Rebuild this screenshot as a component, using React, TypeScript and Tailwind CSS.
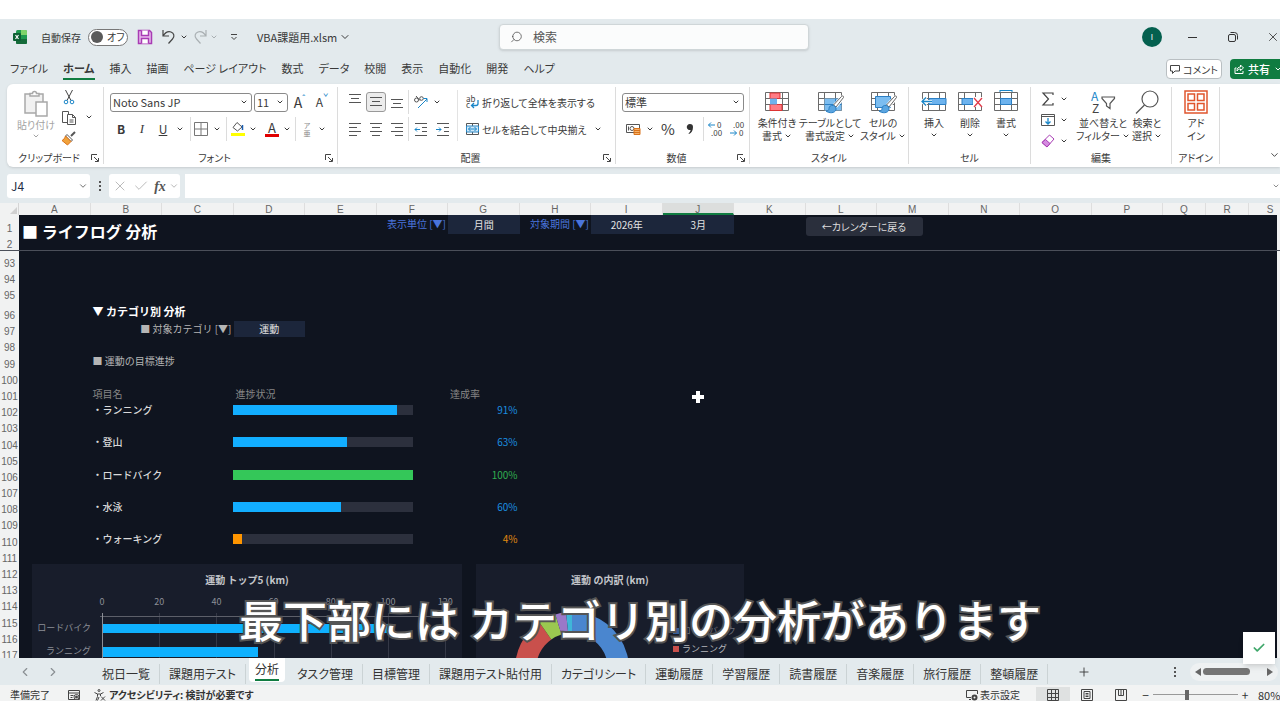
import React from 'react';
import { ChevronDown, ChevronLeft, ChevronRight, Check, X, Plus, Search } from 'lucide-react';
import clsx from 'clsx';

const menuTabs = ['ファイル', 'ホーム', '挿入', '描画', 'ページ レイアウト', '数式', 'データ', '校閲', '表示', '自動化', '開発', 'ヘルプ'];

const sheetTabs = [
  '祝日一覧', '課題用テスト', '分析', 'タスク管理', '目標管理', '課題用テスト貼付用', 'カテゴリシート',
  '運動履歴', '学習履歴', '読書履歴', '音楽履歴', '旅行履歴', '整頓履歴',
];

const columns = 'ABCDEFGHIJKLMNOPQRS'.split('');
const scrolledRows = Array.from({ length: 25 }, (_, i) => 93 + i);

const goals = [
  { name: 'ランニング', percent: 91, bar: 'bg-[#12aeff]', text: 'text-[#1b8fe0]' },
  { name: '登山', percent: 63, bar: 'bg-[#12aeff]', text: 'text-[#1b8fe0]' },
  { name: 'ロードバイク', percent: 100, bar: 'bg-[#34c759]', text: 'text-[#2fae50]' },
  { name: '水泳', percent: 60, bar: 'bg-[#12aeff]', text: 'text-[#1b8fe0]' },
  { name: 'ウォーキング', percent: 4, bar: 'bg-[#ff9500]', text: 'text-[#e08a10]' },
];

const columnGrid = 'grid w-[1273px] shrink-0 grid-cols-[repeat(16,1fr)_repeat(3,43px)]';
const scrolledGrid = 'grid h-[410px] grid-rows-[18px_16px_16px_20px_repeat(21,1fr)]';

const Caret: React.FC<{ className?: string }> = ({ className }) => (
  <ChevronDown className={clsx('h-2 w-2 shrink-0', className)} strokeWidth={3} />
);

type ToolProps = { label: string; className?: string; children: React.ReactNode };

const Tool: React.FC<ToolProps> = ({ label, className, children }) => (
  <button type="button" aria-label={label} className={clsx('flex shrink-0 items-center justify-center', className)}>
    {children}
  </button>
);

const Divider = () => <div className="h-6 w-px shrink-0 bg-[#dcdcdc]" />;

const Launcher = () => (
  <button type="button" aria-label="詳細" className="absolute right-1 bottom-[2px]">
    <svg className="h-2 w-2" viewBox="0 0 8 8" fill="none" stroke="#444">
      <path d="M.5 6V.5H6M3 3l4 4M7.5 4v3.5H4" />
    </svg>
  </button>
);

type GroupProps = { title: string; className?: string; launcher?: boolean; children: React.ReactNode };

const Group: React.FC<GroupProps> = ({ title, className, launcher, children }) => (
  <section className={clsx('relative my-[3px] flex shrink-0 flex-col justify-between border-r border-[#dcdcdc]', className)}>
    <div className="pt-[3px]">{children}</div>
    <h2 className={clsx('text-center text-[10px] leading-3', launcher && 'pr-3')}>{title}</h2>
    {launcher && <Launcher />}
  </section>
);

type LinesProps = { widths: number[]; align: 'left' | 'center' | 'right'; arrow?: 'in' | 'out' };

const Lines: React.FC<LinesProps> = ({ widths, align, arrow }) => (
  <svg className="h-4 w-4" viewBox="0 0 16 16" fill="none" stroke="#555">
    {widths.map((w, i) => {
      const x = align === 'left' ? 2 : align === 'right' ? 14 - w : 8 - w / 2;
      return <path key={i} d={`M${x} ${2.5 + i * 4}h${w}`} />;
    })}
    {arrow === 'out' && <path d="M7 8.5H2M4 6.5l-2 2 2 2" stroke="#1a86c8" />}
    {arrow === 'in' && <path d="M1 8.5h5M4 6.5l2 2-2 2" stroke="#1a86c8" />}
  </svg>
);

/* Small worksheet picture that the style and cell commands are built on */
const GridIcon: React.FC<{ children?: React.ReactNode }> = ({ children }) => (
  <svg className="h-6 w-7" viewBox="0 0 28 24" fill="none">
    <path d="M2.5 2.5h23v18h-23zM8.500 2.5v18M19.500 2.5v18M2.5 8.500h23M2.5 14.500h23" stroke="#6a6a6a" />
    {children}
  </svg>
);

type BigToolProps = { lines: string[]; className?: string; caretBelow?: boolean; caret?: boolean; children: React.ReactNode };

const BigTool: React.FC<BigToolProps> = ({ lines, className, caretBelow, caret, children }) => (
  <button type="button" className={clsx('flex shrink-0 flex-col items-center text-[10px] leading-[13px]', className)}>
    <span className="mb-[2px] flex h-6 items-center">{children}</span>
    {lines.map((line, i) => (
      <span key={line} className="flex items-center gap-[2px] whitespace-nowrap">
        {line}
        {caret && i === lines.length - 1 && <Caret />}
      </span>
    ))}
    {caretBelow && <Caret className="mt-[2px]" />}
  </button>
);

const PaintBrush = () => (
  <>
    <path d="M27 7l-8 9" stroke="#fff" strokeWidth="5" />
    <path d="M25.500 6.500l-8 8.500 2.500 2 7.500-9.500c.8-1.200-1-2.200-2-1z" fill="#fff" stroke="#666" />
    <path d="M17.500 15.500c-3-.5-4.500 1-4.500 3 0 1.500-1 2.500-3 2.500 3 2.500 9 2.500 10-1.500.3-2-.7-3.500-2.500-4z" fill="#5aa5e0" stroke="#2b7fc4" />
  </>
);

const TitleBar = () => (
  <header className="flex h-9 items-center">
    <div className="flex w-[499px] shrink-0 items-center">
      <svg className="ml-3 h-4 w-4" viewBox="0 0 16 16">
        <rect x="4" y="1" width="11" height="14" rx="1.500" fill="#1f9a50" />
        <path d="M9 1h4.500A1.500 1.500 0 0 1 15 2.500V6H9z" fill="#7fd36a" />
        <path d="M4 10h11v3.500a1.500 1.500 0 0 1-1.500 1.500h-8A1.500 1.500 0 0 1 4 13.500z" fill="#156b3a" />
        <rect x="1" y="4" width="8" height="8" rx="1" fill="#0d6134" />
        <path d="M3.500 6l3 4M6.500 6l-3 4" stroke="#fff" strokeWidth="1.200" />
      </svg>
      <label htmlFor="autosave" className="ml-[13px] w-[47px] text-[10px]">自動保存</label>
      <span className="relative flex h-[17px] w-10 items-center rounded-full border border-[#777] bg-white">
        <input id="autosave" type="checkbox" role="switch" className="absolute inset-0 appearance-none" />
        <span className="ml-[2px] h-3 w-3 shrink-0 rounded-full bg-[#5a5a5a]" />
        <span className="ml-1 text-[10px] leading-3 whitespace-nowrap">オフ</span>
      </span>
      <Tool label="上書き保存" className="ml-[9px] w-4">
        <svg className="h-4 w-4" viewBox="0 0 16 16" fill="none" stroke="#a83cb4" strokeWidth="1.500">
          <path d="M1.500 1.500h11l2 2v11h-13z" fill="#e9b8ee" />
          <path d="M4.500 1.500v5h7v-5M4.500 14.500v-5h7v5" fill="#fff" />
        </svg>
      </Tool>
      <Tool label="元に戻す" className="ml-2 w-[15px]">
        <svg className="h-4 w-[15px]" viewBox="0 0 15 16" fill="none" stroke="#444" strokeWidth="1.200">
          <path d="M2 1v6h6M2.200 6.800C4 4 7 2 10 3s4 4.500 1.500 7L7.500 14.500" />
        </svg>
      </Tool>
      <Tool label="元に戻す一覧" className="w-4"><Caret /></Tool>
      <Tool label="やり直し" className="ml-px w-[15px] text-[#a9afb2]">
        <svg className="h-4 w-[15px]" viewBox="0 0 15 16" fill="none" stroke="currentColor" strokeWidth="1.200">
          <path d="M13 1v6H7M12.800 6.800C11 4 8 2 5 3s-4 4.500-1.500 7l4 4.500" />
        </svg>
      </Tool>
      <Tool label="やり直し一覧" className="w-3 text-[#a9afb2]"><Caret /></Tool>
      <Tool label="クイック アクセス ツール バー" className="ml-2 w-3">
        <svg className="h-2 w-2" viewBox="0 0 8 8" fill="none" stroke="#444"><path d="M1 1.500h6M1.500 4L4 6.500 6.500 4" /></svg>
      </Tool>
      <button type="button" className="ml-[17px] flex items-center gap-[2px] text-[11px]">
        VBA課題用.xlsm
        <ChevronDown className="h-3 w-3" />
      </button>
    </div>
    <label className="flex h-[26px] w-[310px] shrink-0 items-center rounded border border-[#cfd6d8] bg-[#fbfcfc] pl-[10px] shadow-sm">
      <Search className="h-[14px] w-[14px] -scale-x-100 text-[#555]" strokeWidth={1.500} />
      <input type="text" placeholder="検索" className="ml-[10px] w-full bg-transparent text-[12px] outline-none placeholder:text-[#555]" />
    </label>
    <div className="ml-auto flex items-center">
      <button type="button" className="mr-[10px] h-5 w-5 rounded-full bg-[#04604f] text-[8px] text-white">I</button>
      <Tool label="最小化" className="h-5 w-10">
        <svg className="h-3 w-3" viewBox="0 0 12 12" stroke="#333"><path d="M2 6.500h9" /></svg>
      </Tool>
      <Tool label="元に戻す (縮小)" className="h-5 w-[42px]">
        <svg className="h-3 w-3" viewBox="0 0 12 12" fill="none" stroke="#333">
          <rect x="1.500" y="3.500" width="7" height="7" rx="1.500" />
          <path d="M3.500 1.500h4a3 3 0 0 1 3 3v4" />
        </svg>
      </Tool>
      <Tool label="閉じる" className="ml-3 h-5 w-[14px]"><X className="h-[14px] w-[14px]" strokeWidth={1.500} /></Tool>
    </div>
  </header>
);

const MenuBar = () => (
  <nav className="flex h-7 items-center justify-between">
    <div className="flex gap-[15px] pl-[10px] text-[11px]">
      {menuTabs.map((tab) => (
        <button
          key={tab}
          type="button"
          className={clsx('h-[22px] border-b-2 whitespace-nowrap', tab === 'ホーム' ? 'border-[#107c41] font-bold' : 'border-transparent')}
        >
          {tab}
        </button>
      ))}
    </div>
    <div className="flex gap-2 text-[10px]">
      <button type="button" className="flex h-5 w-[56px] items-center justify-center gap-[3px] rounded border border-[#b9bfc2] bg-white">
        <svg className="h-[10px] w-[10px]" viewBox="0 0 10 10" fill="none" stroke="#444"><path d="M.5 1.500h9v5.500H5L2.500 9.500V7H.5z" /></svg>
        コメント
      </button>
      <button type="button" className="flex h-5 w-[50px] items-center gap-[4px] rounded-l bg-[#107c41] pl-1 font-medium text-white">
        <svg className="h-[10px] w-[10px] shrink-0" viewBox="0 0 10 10" fill="none" stroke="#fff">
          <path d="M2.500 4H1v5.500h8V7M3 7c0-3 1.500-4 3.500-4V1l3 3-3 2.500V5C5 5 4 5.500 3 7z" />
        </svg>
        <span className="text-[11px] whitespace-nowrap">共有</span>
        <Caret />
      </button>
    </div>
  </nav>
);

const SelectBox: React.FC<{ label: string; value: string; className?: string }> = ({ label, value, className }) => (
  <span className={clsx('relative flex shrink-0 items-center', className)}>
    <select aria-label={label} className="h-[19px] w-full appearance-none rounded-[3px] border border-[#8a8a8a] bg-white pl-[2px] text-[11px] leading-4 outline-none">
      <option>{value}</option>
    </select>
    <Caret className="pointer-events-none absolute right-1" />
  </span>
);

const Ribbon = () => (
  <div className="flex h-[83px] overflow-hidden rounded-l-md bg-white shadow-sm">
    <Group title="クリップボード" launcher className="w-[97px]">
      <div className="flex pl-2">
        <button type="button" className="flex w-[42px] flex-col items-center text-[10px] leading-[13px] text-[#a3a3a3]">
          <svg className="h-7 w-7" viewBox="0 0 28 28" fill="#f1f1f1" stroke="#a8a8a8" strokeWidth="1.500">
            <path d="M3 4h18v19H3z" />
            <path d="M8 6V3.500h2.500a2 2 0 0 1 4 0H17V6z" fill="#fff" />
            <path d="M14 12h11v14H14z" fill="#fff" />
          </svg>
          貼り付け
          <Caret className="mt-px" />
        </button>
        <div className="flex w-[22px] flex-col items-center gap-[4px] pl-[2px]">
          <Tool label="切り取り" className="h-4">
            <svg className="h-4 w-3" viewBox="0 0 12 16" fill="none" stroke="#444">
              <path d="M2.500 0l5.500 10.500M9.500 0L4 10.500" />
              <circle cx="3" cy="12" r="1.800" stroke="#1a86c8" />
              <circle cx="9" cy="12" r="1.800" stroke="#1a86c8" />
            </svg>
          </Tool>
          <Tool label="コピー" className="h-4">
            <svg className="h-4 w-4" viewBox="0 0 16 16" fill="#fff" stroke="#555">
              <path d="M1.500 1.500h6v11h-6z" />
              <path d="M6.500 4.500h5l3 3v7h-8zM11.500 4.500v3h3M8.500 10h4M8.500 12h4" />
            </svg>
          </Tool>
          <Tool label="書式のコピー" className="h-4">
            <svg className="h-4 w-4" viewBox="0 0 16 16" fill="none">
              <path d="M14 2l-4 4" stroke="#555" strokeWidth="2" />
              <path d="M6 4.500l5.500 5.500-1.500 1.500L4.500 6z" fill="#fff" stroke="#555" />
              <path d="M4.500 6L10 11.500 6.500 15 1 10.500c1.500-.5 2.500-2 3.500-4.500z" fill="#f0a23c" stroke="#d9731a" />
            </svg>
          </Tool>
        </div>
        <Tool label="コピーのオプション" className="ml-1 h-[54px] w-3"><Caret /></Tool>
      </div>
    </Group>

    <Group title="フォント" launcher className="w-[234px]">
      <div className="flex h-6 items-center pl-[6px]">
        <SelectBox label="フォント名" value="Noto Sans JP" className="w-[142px]" />
        <SelectBox label="フォント サイズ" value="11" className="ml-[2px] w-[34px]" />
        <Tool label="拡大" className="w-[23px] text-[14px] leading-5">A<span className="-mt-2 text-[9px] text-[#1a86c8]">ˆ</span></Tool>
        <Tool label="縮小" className="w-[22px] text-[12px] leading-5">A<span className="-mt-2 text-[9px] text-[#1a86c8]">ˇ</span></Tool>
      </div>
      <div className="mt-[3px] flex h-6 items-center pl-[6px] text-[12px]">
        <Tool label="太字" className="w-[22px] font-bold">B</Tool>
        <Tool label="斜体" className="w-5 font-['Liberation_Serif'] text-[13px] italic">I</Tool>
        <Tool label="下線" className="w-[22px] underline">U</Tool>
        <Tool label="下線の種類" className="w-3"><Caret /></Tool>
        <span className="ml-1"><Divider /></span>
        <Tool label="罫線" className="w-5">
          <svg className="h-[14px] w-[14px]" viewBox="0 0 14 14" fill="none" stroke="#777"><path d="M.5.5h13v13H.5zM7 .5v13M.5 7h13" /></svg>
        </Tool>
        <Tool label="罫線の種類" className="w-3"><Caret /></Tool>
        <span className="ml-[3px]"><Divider /></span>
        <Tool label="塗りつぶしの色" className="w-[22px]">
          <svg className="h-4 w-4" viewBox="0 0 16 16" fill="none" stroke="#555">
            <path d="M7 1.500l5 4.500-4.500 4L3 6.500z" fill="#fff" />
            <path d="M12.500 4v5" stroke="#1a5fb4" strokeWidth="1.500" />
            <path d="M1 13.500h14" stroke="#ffff00" strokeWidth="3" />
          </svg>
        </Tool>
        <Tool label="塗りつぶしの色の一覧" className="w-2"><Caret /></Tool>
        <Tool label="フォントの色" className="ml-1 flex w-[22px] flex-col">
          <span className="h-[13px] text-[13px] leading-[13px]">A</span>
          <span className="h-[3px] w-[14px] bg-[#e00000]" />
        </Tool>
        <Tool label="フォントの色の一覧" className="w-2"><Caret /></Tool>
        <span className="ml-1"><Divider /></span>
        <Tool label="ふりがな" className="flex w-[22px] flex-col text-[7px] leading-[8px] text-[#888]">
          <span>ア</span>
          <span>亜</span>
        </Tool>
        <Tool label="ふりがなの設定" className="w-2"><Caret /></Tool>
      </div>
    </Group>

    <Group title="配置" launcher className="w-[278px]">
      <div className="flex">
        <div className="w-[120px] shrink-0 border-r border-[#e3e3e3] pl-[6px]">
          <div className="flex h-6 items-center">
            <Tool label="上揃え" className="w-[22px] pb-[4px]"><Lines align="center" widths={[12, 8, 12]} /></Tool>
            <Tool label="上下中央揃え" className="h-5 w-5 rounded-[3px] border border-[#999] bg-[#ececec] pt-px"><Lines align="center" widths={[12, 8, 12]} /></Tool>
            <Tool label="下揃え" className="w-[22px] pt-[6px]"><Lines align="center" widths={[12, 8, 12]} /></Tool>
            <Divider />
            <Tool label="方向" className="w-[24px]">
              <svg className="h-4 w-4" viewBox="0 0 16 16" fill="none" stroke="#555">
                <circle cx="3.500" cy="6" r="2" />
                <path d="M3 2l4 4.500" />
                <circle cx="8.500" cy="4.500" r="1.800" />
                <path d="M5 14l9-9M10.500 4.500H14V8" stroke="#1a86c8" />
              </svg>
            </Tool>
            <Tool label="方向の一覧" className="w-2"><Caret /></Tool>
          </div>
          <div className="mt-[3px] flex h-6 items-center">
            <Tool label="左揃え" className="w-[22px]"><Lines align="left" widths={[12, 8, 12, 8]} /></Tool>
            <Tool label="中央揃え" className="w-5"><Lines align="center" widths={[12, 8, 12, 8]} /></Tool>
            <Tool label="右揃え" className="w-[22px]"><Lines align="right" widths={[12, 8, 12, 8]} /></Tool>
            <Divider />
            <Tool label="インデントを減らす" className="w-6"><Lines align="right" widths={[12, 5, 5, 12]} arrow="out" /></Tool>
            <Tool label="インデントを増やす" className="w-5"><Lines align="right" widths={[12, 5, 5, 12]} arrow="in" /></Tool>
          </div>
        </div>
        <div className="pl-[6px] text-[10px]">
          <button type="button" className="flex h-6 items-center gap-[2px] whitespace-nowrap">
            <svg className="h-4 w-4 overflow-visible" viewBox="0 0 16 16" fill="none" stroke="#444">
              <text x="2" y="8" fontSize="8" fill="#444" stroke="none">ab</text>
              <text x="2" y="14" fontSize="8" fill="#444" stroke="none">c</text>
              <path d="M14 6v3.500a2 2 0 0 1-2 2H8M10 9l-2.500 2.500L10 14" stroke="#1a86c8" strokeWidth="1.300" />
            </svg>
            折り返して全体を表示する
          </button>
          <button type="button" className="mt-[3px] flex h-6 items-center gap-[2px] whitespace-nowrap">
            <svg className="h-4 w-4" viewBox="0 0 16 16" fill="none" stroke="#555">
              <path d="M2.500 2.500h12v11h-12zM8.500 2.500v11" />
              <path d="M2.500 5h12v6h-12z" fill="#cfe8f8" stroke="#2b86c4" />
              <path d="M4.500 8h8M6.500 6l-2 2 2 2M10.500 6l2 2-2 2" stroke="#1a86c8" />
            </svg>
            <span className="w-[110px] text-left">セルを結合して中央揃え</span>
            <Caret />
          </button>
        </div>
      </div>
    </Group>

    <Group title="数値" launcher className="w-[134px]">
      <div className="flex h-6 items-center pl-[6px]">
        <SelectBox label="表示形式" value="標準" className="w-[122px]" />
      </div>
      <div className="mt-[3px] flex h-6 items-center pl-2">
        <Tool label="通貨表示形式" className="w-[18px]">
          <svg className="h-4 w-4" viewBox="0 0 16 16" fill="none" stroke="#555">
            <path d="M1.500 3.500h13v8h-13z" />
            <circle cx="7" cy="7.500" r="2" />
            <path d="M3.500 5.500v4" />
            <path d="M9 7.500h6v6H9zM9 9.500h6M9 11.500h6" fill="#f6b26b" stroke="#d9731a" />
          </svg>
        </Tool>
        <Tool label="通貨の一覧" className="ml-1 w-2"><Caret /></Tool>
        <Tool label="パーセント スタイル" className="w-7 text-[15px] leading-5">%</Tool>
        <Tool label="桁区切りスタイル" className="w-4">
          <svg className="h-3 w-2" viewBox="0 0 8 12" fill="#333"><path d="M4 1a3 3 0 0 1 3 3c0 3.500-1.500 6-4 7l-.5-.8C4 9 4.600 8 4.500 6.900A3 3 0 1 1 4 1z" /></svg>
        </Tool>
        <span className="ml-[5px]"><Divider /></span>
        <Tool label="小数点以下の表示桁数を増やす" className="w-[22px]">
          <svg className="h-4 w-4 overflow-visible" viewBox="0 0 16 16" fill="none" stroke="#1a86c8">
            <path d="M8 4H1.500M4 1.500L1.500 4 4 6.500" />
            <text x="10" y="7" fontSize="8" fill="#444" stroke="none">0</text>
            <text x="4" y="15" fontSize="8" fill="#444" stroke="none">.00</text>
          </svg>
        </Tool>
        <Tool label="小数点以下の表示桁数を減らす" className="w-[22px]">
          <svg className="h-4 w-4 overflow-visible" viewBox="0 0 16 16" fill="none" stroke="#1a86c8">
            <path d="M1 12h6.500M5 9.500L7.500 12 5 14.500" />
            <text x="4" y="7" fontSize="8" fill="#444" stroke="none">.00</text>
            <text x="10" y="15" fontSize="8" fill="#444" stroke="none">0</text>
          </svg>
        </Tool>
      </div>
    </Group>

    <Group title="スタイル" className="w-[159px]">
      <div className="flex pl-[6px]">
        <BigTool lines={['条件付き', '書式']} caret className="w-[42px]">
          <GridIcon>
            <path d="M7 3h10v5.500H7zM7 14.500h12v6H7z" fill="#ff7b84" stroke="#d33" />
            <path d="M7 8.500h7v6H7z" fill="#6db3ee" />
          </GridIcon>
        </BigTool>
        <BigTool lines={['テーブルとして', '書式設定']} caret className="w-[64px]">
          <GridIcon>
            <path d="M8.500 8.500h17v12h-17z" fill="#7cbdf0" />
            <path d="M8.500 14.500h17M19.500 8.500v12" stroke="#2b7fc4" />
            <PaintBrush />
          </GridIcon>
        </BigTool>
        <BigTool lines={['セルの', 'スタイル']} caret className="w-[42px]">
          <GridIcon>
            <path d="M6.500 6.500h15v11h-15z" fill="#7cbdf0" stroke="#2b7fc4" />
            <PaintBrush />
          </GridIcon>
        </BigTool>
      </div>
    </Group>

    <Group title="セル" className="w-[122px]">
      <div className="flex pl-[7px]">
        <BigTool lines={['挿入']} caretBelow className="w-9">
          <GridIcon>
            <path d="M9 8.500h17v6H9z" fill="#6db3ee" stroke="#2b7fc4" />
            <path d="M12 11.500H2M6 7.500l-4 4 4 4" stroke="#fff" strokeWidth="3" />
            <path d="M12 11.500H2M6 7.500l-4 4 4 4" stroke="#1a86c8" strokeWidth="1.300" />
          </GridIcon>
        </BigTool>
        <BigTool lines={['削除']} caretBelow className="w-9">
          <GridIcon>
            <path d="M6 8.500h11v6H6z" fill="#6db3ee" stroke="#2b7fc4" />
            <path d="M17 7h10v10H17z" fill="#fff" />
            <path d="M18 8l8 9M26 8l-8 9" stroke="#e23b4a" strokeWidth="1.300" />
          </GridIcon>
        </BigTool>
        <BigTool lines={['書式']} caretBelow className="w-9">
          <GridIcon>
            <path d="M8.500 8.500h11v6h-11z" fill="#6db3ee" stroke="#2b7fc4" />
            <path d="M8 .5h12M8 0v2M20 0v2" stroke="#1a86c8" />
          </GridIcon>
        </BigTool>
      </div>
    </Group>

    <Group title="編集" className="w-[141px]">
      <div className="flex pl-[7px]">
        <div className="flex w-8 flex-col gap-[3px]">
          <Tool label="オート SUM" className="h-[18px] gap-1">
            <svg className="h-4 w-4" viewBox="0 0 16 16" fill="none" stroke="#444" strokeWidth="1.200"><path d="M13 4V2H3l5.500 6L3 14h10v-2" /></svg>
            <Caret />
          </Tool>
          <Tool label="フィル" className="h-[18px] gap-1">
            <svg className="h-4 w-4" viewBox="0 0 16 16" fill="none" stroke="#555">
              <path d="M1.500 2.500h13v11h-13zM1.500 4.500h13" />
              <path d="M8 6v6M5.500 9.500L8 12l2.500-2.500" stroke="#1a86c8" strokeWidth="1.300" />
            </svg>
            <Caret />
          </Tool>
          <Tool label="クリア" className="h-[18px] gap-1">
            <svg className="h-4 w-4" viewBox="0 0 16 16" fill="#fff" stroke="#a83cb4">
              <path d="M9.500 2l4.500 4-7 8-5-4.500z" />
              <path d="M5.500 6.500L10 10.500 7 14l-5-4.500z" fill="#d58be0" />
            </svg>
            <Caret />
          </Tool>
        </div>
        <BigTool lines={['並べ替えと', 'フィルター']} caret className="ml-[7px] w-[52px]">
          <svg className="h-6 w-6 overflow-visible" viewBox="0 0 24 24" fill="none" stroke="#555" strokeWidth="1.200">
            <text x="0" y="11" fontSize="12" fill="#1a86c8" stroke="none">A</text>
            <text x="1" y="23" fontSize="12" fill="#444" stroke="none">Z</text>
            <path d="M11 7h12.500v1.500l-4.500 5v5l-3.500-2.500v-2.500L11 8.500z" />
          </svg>
        </BigTool>
        <BigTool lines={['検索と', '選択']} caret className="w-9">
          <svg className="h-6 w-6" viewBox="0 0 24 24" fill="none" stroke="#555" strokeWidth="1.200">
            <circle cx="15" cy="9" r="8" />
            <path d="M9.500 15L1 23.500" />
          </svg>
        </BigTool>
      </div>
    </Group>

    <Group title="アドイン" className="w-12">
      <BigTool lines={['アド', 'イン']} className="w-12">
        <svg className="h-6 w-6" viewBox="0 0 24 24" fill="none" stroke="#e0562e" strokeWidth="1.500">
          <path d="M1 1h22v22H1z" />
          <path d="M4 4h6.500v6.500H4zM13.500 4H20v6.500h-6.500zM4 13.500h6.500V20H4zM13.500 13.500H20V20h-6.500z" />
        </svg>
      </BigTool>
    </Group>

    <Tool label="リボンを折りたたむ" className="mt-auto mb-[6px] ml-auto h-3 w-[11px]"><ChevronDown className="h-3 w-3" /></Tool>
  </div>
);

const FormulaBar = () => (
  <div className="flex h-6 text-[#555]">
    <div className="flex w-[83px] items-center rounded-[3px] bg-white pr-[2px] pl-1">
      <input aria-label="名前ボックス" defaultValue="J4" className="w-full text-[12px] text-[#1f2d44] outline-none" />
      <ChevronDown className="h-[10px] w-[10px] shrink-0" />
    </div>
    <div className="flex w-[19px] flex-col items-center justify-center gap-[2px]">
      <i className="h-[2px] w-[2px] bg-[#555]" />
      <i className="h-[2px] w-[2px] bg-[#555]" />
      <i className="h-[2px] w-[2px] bg-[#555]" />
    </div>
    <div className="flex w-[71px] items-center rounded-[3px] bg-white">
      <Tool label="キャンセル" className="w-[22px] text-[#bbb]"><X className="h-4 w-4" strokeWidth={1.500} /></Tool>
      <Tool label="入力" className="w-5 text-[#bbb]"><Check className="h-4 w-4" strokeWidth={1.500} /></Tool>
      <Tool label="関数の挿入" className="w-[18px] font-['Liberation_Serif'] text-[14px] font-bold italic">fx</Tool>
      <ChevronDown className="h-[10px] w-[10px] text-[#aaa]" />
    </div>
    <div className="ml-[5px] flex flex-1 items-center bg-white">
      <input aria-label="数式バー" className="w-full outline-none" />
      <ChevronDown className="h-2 w-2 shrink-0" />
    </div>
  </div>
);

const cellFill = 'bg-[#1c263b] text-center text-[#e3e3e3]';

const FrozenPane = () => (
  <div className={clsx(columnGrid, 'h-[35px] grid-rows-[19px_16px] text-[10px] leading-[18px]')}>
    <h1 className="col-span-3 col-start-1 row-span-2 row-start-1 pl-[3px] text-[16px] leading-8 font-bold whitespace-nowrap text-white">
      ■ ライフログ 分析
    </h1>
    <label htmlFor="unit" className="col-start-6 pr-[2px] text-right whitespace-nowrap text-[#4a74dc]">表示単位 [▼]</label>
    <select id="unit" className={clsx(cellFill, 'col-start-7 appearance-none outline-none')}><option>月間</option></select>
    <label htmlFor="year" className="col-start-8 pr-[2px] text-right whitespace-nowrap text-[#4a74dc]">対象期間 [▼]</label>
    <select id="year" className={clsx(cellFill, 'col-start-9 appearance-none outline-none')}><option>2026年</option></select>
    <select aria-label="月" className={clsx(cellFill, 'col-start-10 appearance-none outline-none')}><option>3月</option></select>
    <button type="button" className="col-span-2 col-start-12 row-span-2 row-start-1 mt-[2px] mr-[26px] h-[19px] rounded-[3px] bg-[#2a2f3c] text-[#dcdcdc] [font-feature-settings:'palt']">
      ←カレンダーに戻る
    </button>
  </div>
);

const GoalTable = () => (
  <table className="col-span-6 col-start-2 row-span-11 row-start-9 h-full w-full table-fixed text-left leading-4">
    <colgroup>
      <col className="w-1/3" />
      <col className="w-1/2" />
      <col className="w-1/6" />
    </colgroup>
    <thead className="text-[#868686]">
      <tr className="h-4">
        <th className="pl-[2px] font-normal">項目名</th>
        <th className="pl-[2px] font-normal">進捗状況</th>
        <th className="pl-[2px] font-normal">達成率</th>
      </tr>
    </thead>
    <tbody className="align-top">
      {goals.map((goal) => (
        <tr key={goal.name} className="h-8">
          <td className="pl-[2px] font-medium text-[#d9d9d9]">・{goal.name}</td>
          <td className="pt-[3px]">
            <div className="h-[10px] w-[180px] bg-[#2c303d]">
              <div className={clsx('h-full', goal.bar)} style={{ width: `${goal.percent === 4 ? 5 : goal.percent}%` }} />
            </div>
          </td>
          <td className={clsx('pr-[2px] text-right', goal.text)}>{goal.percent}%</td>
        </tr>
      ))}
    </tbody>
  </table>
);

const BarChart = () => (
  <figure className="absolute top-[313px] left-[13px] w-[430px] bg-[#181d2b]">
    <figcaption className="h-8 text-center text-[10px] leading-8 font-bold text-[#c4c6ca]">運動 トップ5 (km)</figcaption>
    <svg className="block h-16 w-full" viewBox="0 0 430 64" fontSize="9" fill="#8b8e96">
      {[0, 20, 40, 60, 80, 100, 120].map((km, i) => (
        <g key={km}>
          <text x={70 + i * 57.2} y="9" textAnchor="middle">{km}</text>
          <path d={`M${Math.round(70 + i * 57.2) + 0.5} 17v47`} stroke="#343846" />
        </g>
      ))}
      <path d="M68 20.500h346" stroke="#5c5f69" />
      <rect x="71" y="28" width="286" height="9" fill="#0fb1ff" />
      <rect x="71" y="51" width="155" height="10" fill="#0fb1ff" />
      <path d="M70.500 17v47" stroke="#8b8e96" />
      <text x="59" y="35" textAnchor="end">ロードバイク</text>
      <text x="59" y="58" textAnchor="end">ランニング</text>
    </svg>
  </figure>
);

const slices = [
  { from: 0, to: 150, color: '#4a86cf' },
  { from: 210, to: 325, color: '#c9504c' },
  { from: 325, to: 343, color: '#9bc850' },
  { from: 343, to: 354, color: '#9a78c8' },
  { from: 354, to: 360, color: '#3fb6d8' },
];

const slicePath = (from: number, to: number) => {
  const point = (deg: number, r: number) => {
    const a = (deg * Math.PI) / 180;
    return `${96 + r * Math.sin(a)} ${73 - r * Math.cos(a)}`;
  };
  return `M${point(from, 57)}A57 57 0 0 1 ${point(to, 57)}L${point(to, 36)}A36 36 0 0 0 ${point(from, 36)}Z`;
};

const DonutChart = () => (
  <figure className="absolute top-[313px] left-[457px] w-[268px] bg-[#181d2b]">
    <figcaption className="h-8 text-center text-[10px] leading-8 font-bold text-[#c4c6ca]">運動 の内訳 (km)</figcaption>
    <svg className="block h-16 w-full" viewBox="0 0 268 64" fontSize="9" fill="#b4b6bb">
      {slices.map((slice) => (
        <path key={slice.color} d={slicePath(slice.from, slice.to)} fill={slice.color} />
      ))}
      <rect x="197" y="32" width="6" height="6" fill="#35609a" />
      <text x="206" y="38" fill="#6d7079">ロードバイク</text>
      <rect x="197" y="50" width="6" height="6" fill="#c9504c" />
      <text x="206" y="56">ランニング</text>
    </svg>
  </figure>
);

const Sheet = () => (
  <div className="mt-[5px] bg-[#f1f2f2]">
    {/* Column headers */}
    <div className="flex h-3 overflow-hidden text-[10px] leading-[10px] text-[#666]">
      <div className="flex w-[19px] shrink-0 items-end justify-end border-r border-[#d5d5d5]">
        <svg className="h-2 w-2" viewBox="0 0 8 8" fill="#d0d0d0"><path d="M7 0v7H0z" /></svg>
      </div>
      <div className={clsx(columnGrid, 'h-3')}>
        {columns.map((name) => (
          <div
            key={name}
            className={clsx('h-3 border-r border-[#dedede] pt-[2px] text-center', name === 'J' && 'border-b-2 border-b-[#107c41] bg-[#dcdedd]')}
          >
            {name}
          </div>
        ))}
      </div>
    </div>

    <div className="flex h-9 overflow-hidden border-b border-[#4b4f59] font-['Noto_Sans_CJK_JP',sans-serif]">
      <div className="grid w-[19px] shrink-0 grid-rows-[19px_16px] items-end text-center font-['Liberation_Sans'] text-[10px] leading-[10px] text-[#666]">
        <span>1</span>
        <span>2</span>
      </div>
      <div className="mr-[3px] flex-1 overflow-hidden bg-[#0f141f]"><FrozenPane /></div>
    </div>

    <div className="flex h-[407px] overflow-hidden">
      <div className={clsx(scrolledGrid, 'w-[19px] shrink-0 items-end text-center text-[10px] leading-[10px] text-[#666]')}>
        {scrolledRows.map((row) => (
          <span key={row}>{row}</span>
        ))}
      </div>
      <div className="relative mr-[3px] flex-1 overflow-hidden bg-[#0f141f] font-['Noto_Sans_CJK_JP',sans-serif] text-[10px] leading-4">
        <div className={clsx(columnGrid, scrolledGrid)}>
          <h2 className="col-span-3 col-start-2 row-start-4 pl-[2px] text-[11px] leading-5 font-bold text-white">▼ カテゴリ別 分析</h2>
          <label htmlFor="category" className="col-span-2 col-start-2 row-start-5 pr-[2px] text-right text-[#b5b5b5]">■ 対象カテゴリ [▼]</label>
          <select id="category" className={clsx(cellFill, 'col-start-4 row-start-5 appearance-none outline-none')}><option>運動</option></select>
          <h3 className="col-span-3 col-start-2 row-start-7 self-center pl-[2px] text-[#b5b5b5]">■ 運動の目標進捗</h3>
          <GoalTable />
        </div>
        <BarChart />
        <DonutChart />
        <svg className="absolute top-[139px] left-[672px] h-[14px] w-[14px]" viewBox="0 0 14 14" fill="#fff">
          <path d="M5 1h4v4h4v4H9v4H5V9H1V5h4z" />
        </svg>
      </div>
    </div>
  </div>
);

const SheetTabs = () => (
  <div className="flex h-[27px] items-center text-[12px] text-[#333]">
    <div className="flex w-[93px] shrink-0 gap-[14px] pl-[18px] text-[#8a9093]">
      <Tool label="前のシート" className="w-[14px]"><ChevronLeft className="h-[14px] w-[14px]" /></Tool>
      <Tool label="次のシート" className="w-[14px]"><ChevronRight className="h-[14px] w-[14px]" /></Tool>
    </div>
    {sheetTabs.map((tab) =>
      tab === '分析' ? (
        <button key={tab} type="button" className="mx-[3px] h-6 shrink-0 self-start rounded-b bg-white px-[6px]">
          <span className="block border-b-2 border-[#107c41] leading-5">{tab}</span>
        </button>
      ) : (
        <button key={tab} type="button" className="mt-1 shrink-0 border-r border-[#cbd3d5] px-[9px] leading-5 whitespace-nowrap">
          {tab}
        </button>
      ),
    )}
    <Tool label="新しいシート" className="ml-7 w-4"><Plus className="h-[14px] w-[14px]" strokeWidth={1.500} /></Tool>
    <div className="ml-auto flex items-center">
      <span className="mr-[14px] flex flex-col gap-[2px]">
        <i className="h-[2px] w-[2px] bg-[#555]" />
        <i className="h-[2px] w-[2px] bg-[#555]" />
        <i className="h-[2px] w-[2px] bg-[#555]" />
      </span>
      <div className="mr-[2px] flex h-[18px] w-[88px] items-center justify-between rounded-full bg-[#eef1f2] px-1">
        <svg className="h-2 w-2" viewBox="0 0 8 8" fill="#666"><path d="M7 0v8L1 4z" /></svg>
        <span className="mr-4 h-[7px] w-[47px] rounded-full bg-[#757575]" />
        <svg className="h-2 w-2" viewBox="0 0 8 8" fill="#666"><path d="M1 0v8l6-4z" /></svg>
      </div>
    </div>
  </div>
);

const StatusBar = () => (
  <footer className="flex h-4 items-center overflow-hidden bg-[#f2f3f3] pt-[3px] text-[10px] leading-3 text-[#333]">
    <span className="w-[57px] pl-[10px]">準備完了</span>
    <Tool label="マクロの記録" className="w-[33px]">
      <svg className="h-3 w-3" viewBox="0 0 12 12" fill="none" stroke="#444">
        <path d="M.5 1.500h11v9H.5zM.5 4h11M2.500 6.500h3M2.500 8.500h2" />
        <circle cx="8.500" cy="8" r="2.500" fill="#fff" />
        <circle cx="8.500" cy="8" r="1" fill="#444" />
      </svg>
    </Tool>
    <button type="button" className="ml-1 flex items-center gap-[3px] font-bold">
      <svg className="h-3 w-3" viewBox="0 0 12 12" fill="none" stroke="#444">
        <circle cx="5" cy="1.500" r="1" />
        <path d="M.5 3.500l3 1.500v2.500l-1.500 4M9.500 3.500l-3 1.500v2M3.500 5h3M5 8l-1.500 3.500M7 7.500l4 4M11 7.500l-4 4" />
      </svg>
      アクセシビリティ: 検討が必要です
    </button>
    <button type="button" className="mr-4 ml-auto flex items-center gap-[2px]">
      <svg className="h-3 w-3" viewBox="0 0 12 12" fill="none" stroke="#444">
        <path d="M5 8.500H.5v-7h11V5M3 10.500h2" />
        <circle cx="8.500" cy="8.500" r="2" strokeWidth="2" />
      </svg>
      表示設定
    </button>
    <Tool label="標準" className="h-4 w-[34px] bg-[#dfe1e1]">
      <svg className="h-3 w-3" viewBox="0 0 12 12" fill="none" stroke="#444"><path d="M.5.5h11v11H.5zM4.500.5v11M8.500.5v11M.5 4.500h11M.5 8.500h11" /></svg>
    </Tool>
    <Tool label="ページ レイアウト表示" className="w-[34px]">
      <svg className="h-3 w-3" viewBox="0 0 12 12" fill="none" stroke="#444"><path d="M.5.5h11v11H.5zM3 2.500h6v7H3zM4.500 4.500h3M4.500 6h3M4.500 7.500h3" /></svg>
    </Tool>
    <Tool label="改ページ プレビュー" className="w-[34px]">
      <svg className="h-3 w-3" viewBox="0 0 12 12" fill="none" stroke="#444"><path d="M.5.5h11v11H.5zM3.500.5v6h5v-6M6 .5v6" /></svg>
    </Tool>
    <Tool label="縮小" className="w-[15px] text-[12px] leading-3">−</Tool>
    <input
      type="range"
      aria-label="ズーム"
      min="10"
      max="190"
      defaultValue="80"
      className="h-3 w-[85px] appearance-none bg-transparent bg-[linear-gradient(#999,#999)] bg-[size:100%_1px] bg-center bg-no-repeat [&::-webkit-slider-thumb]:h-[10px] [&::-webkit-slider-thumb]:w-1 [&::-webkit-slider-thumb]:appearance-none [&::-webkit-slider-thumb]:bg-[#666]"
    />
    <Tool label="拡大" className="w-[14px] text-[12px] leading-3">+</Tool>
    <button type="button" className="ml-[6px] w-[22px] text-left text-[11px] leading-3 whitespace-nowrap">80%</button>
  </footer>
);

export default function App() {
  return (
    <div className="relative min-h-screen overflow-hidden bg-white pt-[19px]">
      <div className="relative bg-[#e3eaed] font-['Noto_Sans_CJK_JP',sans-serif] text-[#3a3a3a] [font-feature-settings:'palt']">
        <TitleBar />
        <MenuBar />
        <main>
          <div className="mt-px ml-[7px]">
            <Ribbon />
            <div className="h-[7px]" />
            <FormulaBar />
          </div>
          <div className="font-['Liberation_Sans',sans-serif] [font-feature-settings:normal]">
            <Sheet />
          </div>
        </main>
        <SheetTabs />
        <StatusBar />

        <button type="button" aria-label="完了" className="absolute right-[5px] bottom-[37px] flex h-8 w-8 items-center justify-center bg-white shadow-md">
          <Check className="h-[14px] w-[14px] text-[#3fa76a]" strokeWidth={3} />
        </button>
        <p className="pointer-events-none absolute inset-x-0 bottom-[50px] text-center text-[44px] leading-[64px] font-medium text-white [font-feature-settings:normal] [paint-order:stroke_fill] [-webkit-text-stroke:4px_#555]">
          最下部には カテゴリ別の分析があります
        </p>
      </div>
    </div>
  );
}
